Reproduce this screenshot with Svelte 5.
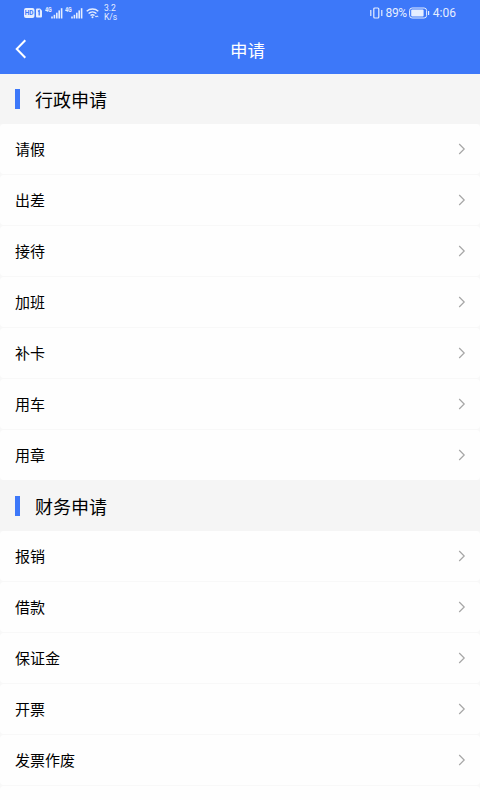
<script lang="ts">
  interface Group {
    title: string;
    items: string[];
  }

  const groups: Group[] = [
    { title: '行政申请', items: ['请假', '出差', '接待', '加班', '补卡', '用车', '用章'] },
    { title: '财务申请', items: ['报销', '借款', '保证金', '开票', '发票作废', ''] }
  ];
</script>

{#snippet signal()}
  <svg class="signal" width="18" height="12" viewBox="0 0 18 12" fill="currentColor">
    <text x="0" y="5.3" font-size="7" font-weight="700" textLength="6.8" lengthAdjust="spacingAndGlyphs">4G</text>
    <rect x="6.2" y="9.5" width="1.6" height="2" />
    <rect x="8.6" y="7.8" width="1.6" height="3.7" />
    <rect x="11" y="5.7" width="1.6" height="5.8" />
    <rect x="13.4" y="3.4" width="1.6" height="8.1" />
    <rect x="15.8" y="1.2" width="1.6" height="10.3" />
  </svg>
{/snippet}

<div class="page">
  <header class="header">
    <div class="status">
      <div class="status-left">
        <svg width="18" height="10" viewBox="0 0 18 10">
          <rect x="0" y="0" width="10.5" height="10" rx="2" fill="currentColor" />
          <text x="5.2" y="7.3" font-size="6.5" font-weight="700" text-anchor="middle" fill="#3d78f9">HD</text>
          <path d="M13 .5h3l2 2V8.5a1 1 0 0 1-1 1h-4a1 1 0 0 1-1-1v-7a1 1 0 0 1 1-1z" fill="currentColor" />
          <path d="M14 3.4l1.2-.8v5" fill="none" stroke="#3d78f9" stroke-width="1.3" />
        </svg>
        {@render signal()}
        {@render signal()}
        <svg class="wifi" width="14" height="12" viewBox="0 0 14 12" fill="none" stroke="currentColor" stroke-width="1.4">
          <path d="M.7 4.2a8.6 8.6 0 0 1 11.6 0" />
          <path d="M2.6 6.5a5.8 5.8 0 0 1 7.8 0" />
          <path d="M4.5 8.6a3 3 0 0 1 4 0" />
          <circle cx="6.5" cy="10.2" r="1" fill="currentColor" stroke="none" />
          <path d="M9.2 8.8l1 1.3 1-1.3 1 1.3" stroke-width="1" />
        </svg>
        <div class="speed">
          <span>3.2</span>
          <span>K/s</span>
        </div>
      </div>
      <div class="status-right">
        <svg width="13" height="12" viewBox="0 0 13 12" fill="none" stroke="currentColor" stroke-width="1.2">
          <rect x="3.8" y="1" width="5" height="10" rx="1" />
          <path d="M.8 3v6M11.8 3v6" />
        </svg>
        <span class="percent">89%</span>
        <svg class="battery" width="21" height="12" viewBox="0 0 21 12">
          <rect x=".6" y="1" width="17" height="10" rx="2.5" fill="none" stroke="currentColor" />
          <rect x="2.2" y="2.6" width="12.4" height="6.8" rx="1" fill="currentColor" />
          <path d="M19.6 4v4" stroke="currentColor" stroke-width="1.2" />
        </svg>
        <span>4:06</span>
      </div>
    </div>
    <div class="navbar">
      <button class="back" aria-label="返回">
        <svg width="12" height="20" viewBox="0 0 12 20" fill="none" stroke="currentColor" stroke-width="2">
          <path d="M10.3 1.2L1.7 10l8.6 8.8" />
        </svg>
      </button>
      <h1>申请</h1>
    </div>
  </header>

  <main>
    {#each groups as group}
      <h2 class="group-title">{group.title}</h2>
      <ul class="list">
        {#each group.items as item}
          <li class="row">
            <span>{item}</span>
            <svg width="8" height="12" viewBox="0 0 8 12" fill="none" stroke="#a6a6a6" stroke-width="1.2">
              <path d="M1.2 1l5 5-5 5" />
            </svg>
          </li>
        {/each}
      </ul>
    {/each}
  </main>
</div>

<style>
  :global(body) {
    overflow: hidden;
  }

  .page {
    height: 800px;
    overflow: hidden;
    background: #f5f5f5;
    color: #000;
    font-family: 'Noto Sans CJK SC', sans-serif;
  }

  .header {
    height: 74px;
    background: #3d78f9;
    color: #fff;
  }

  .status {
    display: flex;
    align-items: center;
    justify-content: space-between;
    height: 25px;
    padding: 0 24px 0 24px;
    color: #e6eeff;
    font-family: Roboto, sans-serif;
  }

  .status-left,
  .status-right {
    display: flex;
    align-items: center;
  }

  .status-left .signal {
    margin-left: 3px;
  }

  .status-left .signal + .signal {
    margin-left: 2px;
  }

  .wifi {
    margin-left: 3px;
  }

  .speed {
    display: flex;
    flex-direction: column;
    margin-left: 4px;
    font-size: 8.5px;
    line-height: 9px;
  }

  .status-right {
    font-size: 12px;
  }

  .percent {
    margin-left: 2px;
    letter-spacing: -0.3px;
  }

  .battery {
    margin: 0 3px 0 2px;
  }

  .navbar {
    display: grid;
    grid-template-columns: 30px 1fr 15px;
    align-items: center;
    height: 49px;
  }

  .back {
    display: flex;
    padding: 0 0 2px 15px;
    border: 0;
    background: none;
    color: inherit;
  }

  h1 {
    margin: 0;
    font-size: 17.5px;
    font-weight: 400;
    line-height: 24px;
    text-align: center;
  }

  .group-title {
    display: flex;
    align-items: center;
    height: 50px;
    margin: 0;
    padding: 0 15px;
    font-size: 18px;
    font-weight: 400;
  }

  .group-title::before {
    content: '';
    width: 5px;
    height: 20px;
    margin-right: 15px;
    background: #3d78f9;
  }

  .list {
    display: flex;
    flex-direction: column;
    gap: 1px;
    margin: 0 0 1px;
    padding: 0;
    background: #f8f8f8;
    list-style: none;
  }

  .row {
    display: flex;
    align-items: center;
    justify-content: space-between;
    height: 50px;
    padding: 0 14px 0 15px;
    box-sizing: border-box;
    border-radius: 4px;
    background: #fefefe;
    font-size: 15px;
  }

  .row span {
    padding-bottom: 2px;
  }
</style>
